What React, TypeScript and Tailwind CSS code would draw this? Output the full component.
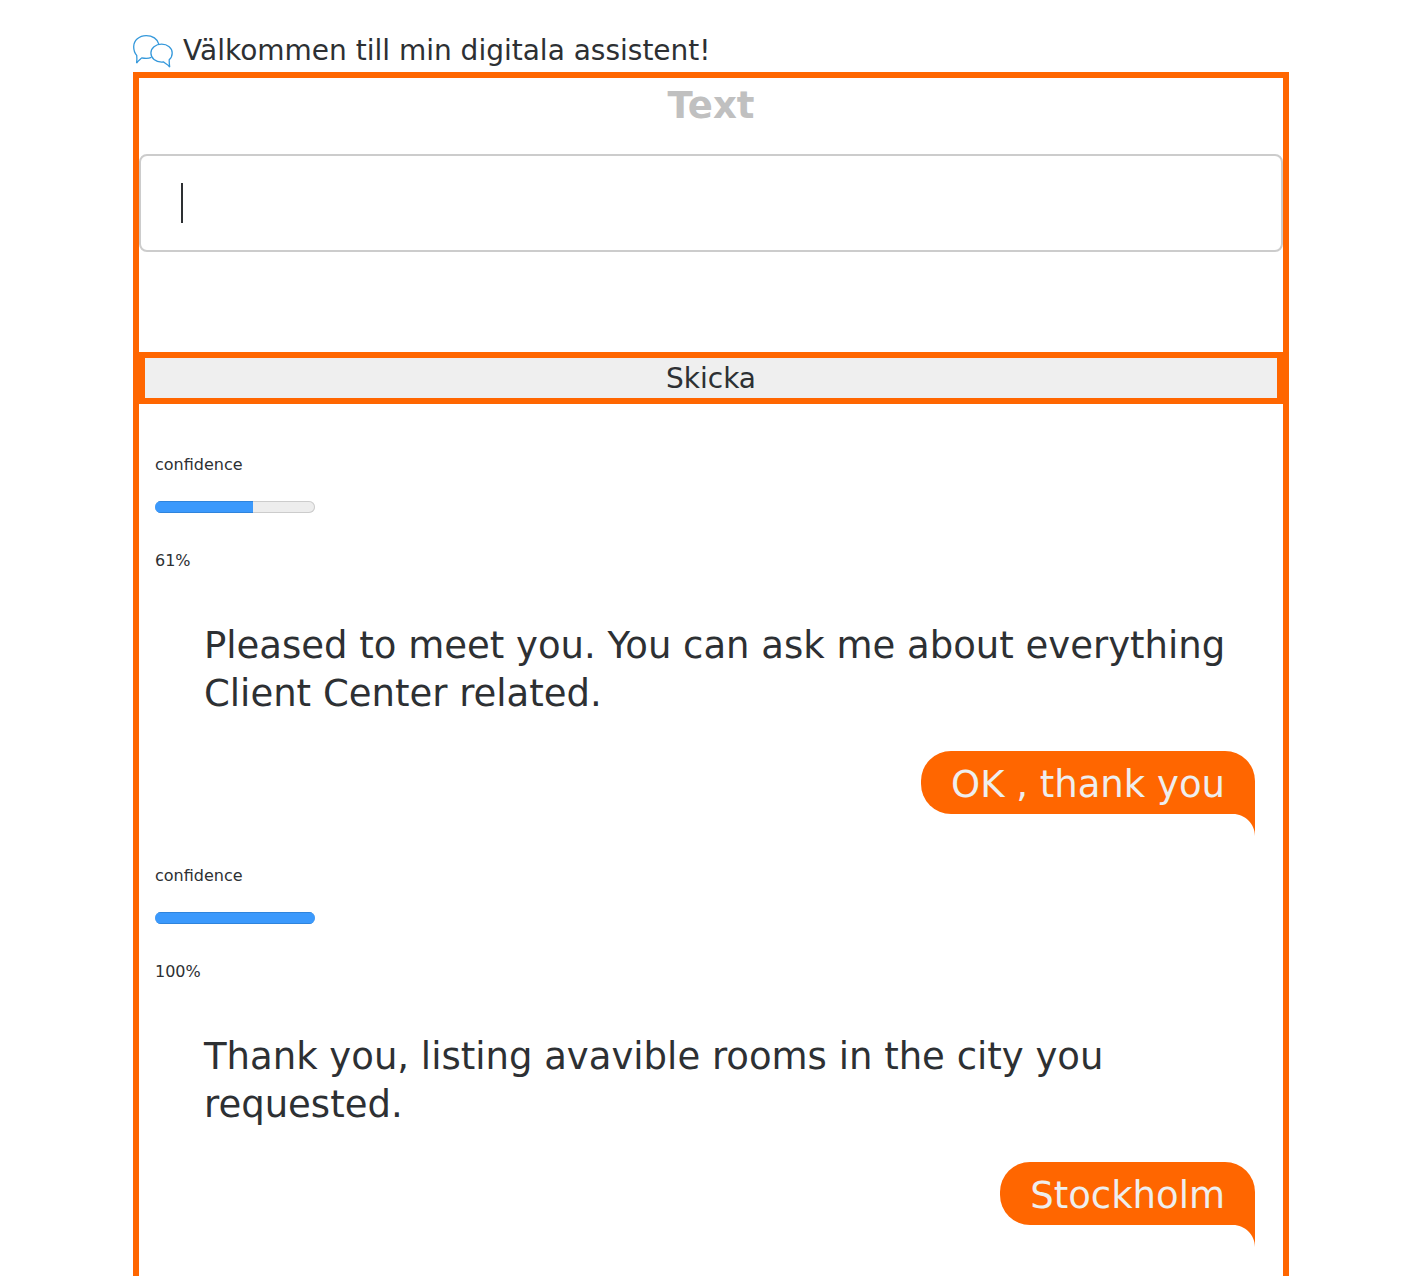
import { useState } from "react";

type Exchange = { confidence: number; reply: string; user: string };

const exchanges: Exchange[] = [
  {
    confidence: 61,
    reply: "Pleased to meet you. You can ask me about everything Client Center related.",
    user: "OK , thank you",
  },
  {
    confidence: 100,
    reply: "Thank you, listing avavible rooms in the city you requested.",
    user: "Stockholm",
  },
];

function ChatIcon() {
  return (
    <svg
      className="h-9 w-10 shrink-0"
      viewBox="0 0 40 36"
      fill="none"
      stroke="#3498db"
      strokeWidth="1.3"
      strokeLinejoin="miter"
      aria-hidden="true"
    >
      <path d="M18.4 24.4C16.6 25.2 15 25.4 13.2 25.4C11.6 25.4 10.2 25.2 8.8 24.9C7 26.6 5.6 27.4 3.6 30C4.1 27.2 4 25 3.7 22.4C1.7 20.2 .7 17 .7 13.8C.7 7.4 6.2 2.6 13.2 2.6C19.4 2.6 24.6 5.8 25.8 11.2" />
      <path d="M28.6 11.2C34.6 11.2 39.2 15 39.2 19.9C39.2 22.8 38 25.2 36.2 26.8C36.1 29 36.3 31 36.7 34C35 31.6 32.6 30.8 30.6 29C30 29.1 29.3 29.1 28.6 29.1C22.6 29.1 17.9 25.2 17.9 20.1C17.9 15 22.6 11.2 28.6 11.2Z" />
    </svg>
  );
}

function ConfidenceMeter({ value }: { value: number }) {
  return (
    <div className="px-4 text-base leading-6">
      <p>confidence</p>
      <div
        role="meter"
        aria-label="confidence"
        aria-valuemin={0}
        aria-valuemax={100}
        aria-valuenow={value}
        className="mt-6 h-3 w-40 overflow-hidden rounded-full bg-[#ededed] inset-ring inset-ring-[#cccccc]"
      >
        <div className="h-full border-y border-[#2f84dc] bg-[#3b99fc]" style={{ width: `${value}%` }} />
      </div>
      <p className="mt-9">{value}%</p>
    </div>
  );
}

function UserBubble({ text }: { text: string }) {
  return (
    <div className="relative mr-7 ml-auto w-fit rounded-[30px] rounded-br-none bg-[#ff6600] px-[30px] pt-[10px] pb-[5px] text-[37px] leading-[48px] text-[#eeeeee]">
      {text}
      <svg className="absolute top-full right-0 h-[22px] w-[22px]" viewBox="0 0 22 22" fill="#ff6600" aria-hidden="true">
        <path d="M0 0H22V22C22 10 12 0 0 0Z" />
      </svg>
    </div>
  );
}

export default function App() {
  const [draft, setDraft] = useState("");
  return (
    <main className="flex min-h-screen flex-col bg-white pt-7 pr-[127px] pl-[133px] font-['DejaVu_Sans',sans-serif] text-[#2d3033]">
      <header className="flex h-11 shrink-0 items-center gap-2.5 pt-0.5">
        <ChatIcon />
        <h1 className="text-[28px] leading-9">Välkommen till min digitala assistent!</h1>
      </header>
      <section className="flex-1 border-x-6 border-t-6 border-[#ff6600]">
        <form onSubmit={(e) => e.preventDefault()}>
          <label htmlFor="message" className="block pt-1 text-center text-[37px] leading-[48px] font-bold text-[#c0c0c0]">
            Text
          </label>
          <div className="relative mt-6">
            <input
              id="message"
              value={draft}
              onChange={(e) => setDraft(e.target.value)}
              className="block h-[98px] w-full rounded-lg border-2 border-[#cccccc] bg-white px-10 text-[37px] caret-transparent outline-none focus:caret-[#2d3033]"
            />
            {draft === "" && (
              <span className="pointer-events-none absolute inset-y-[29px] left-[42px] w-0.5 bg-[#2d3033]" />
            )}
          </div>
          <button
            type="submit"
            className="mt-25 block h-[52px] w-full border-6 border-[#ff6600] bg-[#efefef] pt-0.5 text-[28px] leading-9"
          >
            Skicka
          </button>
        </form>
        {exchanges.map((item) => (
          <article key={item.user} className="pt-[49px] pb-px">
            <ConfidenceMeter value={item.confidence} />
            <p className="mt-[49px] pr-7 pl-[65px] text-[37px] leading-[48px]">{item.reply}</p>
            <div className="mt-[33px]">
              <UserBubble text={item.user} />
            </div>
          </article>
        ))}
      </section>
    </main>
  );
}
